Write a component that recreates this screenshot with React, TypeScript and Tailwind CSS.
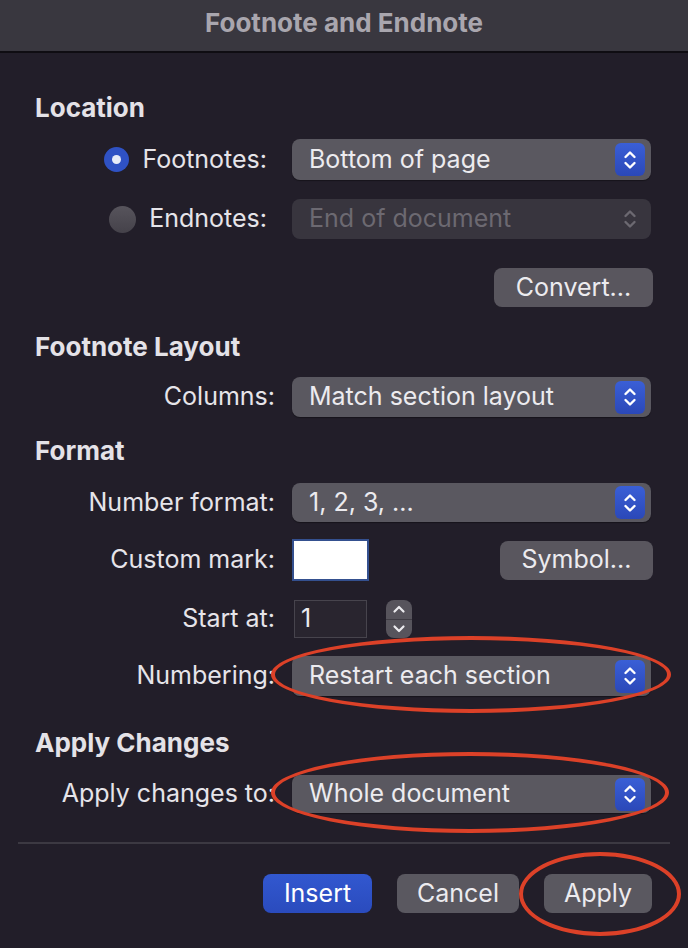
import React from "react";

const FONT = { fontFamily: "Inter, 'Noto Sans', 'Liberation Sans', sans-serif" };

function Chevrons({ color = "#ffffff" }: { color?: string }) {
  return (
    <svg width="16" height="24" viewBox="0 0 16 24" fill="none">
      <path d="M3.5 9 L8 4.5 L12.5 9" stroke={color} strokeWidth="2.4" strokeLinecap="round" strokeLinejoin="round" />
      <path d="M3.5 15 L8 19.5 L12.5 15" stroke={color} strokeWidth="2.4" strokeLinecap="round" strokeLinejoin="round" />
    </svg>
  );
}

function Popup({ text, disabled = false, h = "h-[40px]" }: { text: string; disabled?: boolean; h?: string }) {
  return (
    <div
      className={`w-[359px] ${h} rounded-[8px] flex items-center justify-between pl-[17px] pr-[6px] ${
        disabled ? "bg-[#38353e]" : "bg-[#5a5860] shadow-[0_1px_1px_rgba(0,0,0,0.35)]"
      }`}
    >
      <span className={`text-[25px] ${disabled ? "text-[#6c6971]" : "text-[#ecebef]"}`}>{text}</span>
      {disabled ? (
        <div className="w-[30px] h-[32px] flex items-center justify-center">
          <Chevrons color="#6c6971" />
        </div>
      ) : (
        <div className="w-[30px] h-[33px] rounded-[6px] bg-gradient-to-b from-[#3a5fd6] to-[#2b48b8] flex items-center justify-center">
          <Chevrons />
        </div>
      )}
    </div>
  );
}

function Label({ children }: { children: React.ReactNode }) {
  return <div className="w-[275px] text-right text-[25px] text-[#e6e4e9] shrink-0 whitespace-nowrap">{children}</div>;
}

function Heading({ children, mt }: { children: React.ReactNode; mt: string }) {
  return (
    <div className={`${mt} h-[30px] leading-[30px] pl-[35px] text-[26px] font-bold text-[#e4e2e7]`}>{children}</div>
  );
}

function Ellipse({ cls }: { cls: string }) {
  return <div className={`absolute rounded-[50%] border-[4px] border-[#dc4128] pointer-events-none ${cls}`} />;
}

export default function App() {
  return (
    <div className="relative w-[688px] h-[948px] bg-[#221e29] overflow-hidden" style={FONT}>
      <div className="h-[53px] bg-[#39373f] border-b-[2px] border-[#0f0d12] flex items-center justify-center pb-[6px]">
        <span className="text-[26px] font-bold text-[#a9a6ae]">Footnote and Endnote</span>
      </div>

      <Heading mt="mt-[40px]">Location</Heading>

      <div className="mt-[16px] h-[41px] flex items-center">
        <div className="w-[267px] flex items-center justify-end shrink-0">
          <div className="w-[25px] h-[25px] rounded-full bg-[#2f52c4] flex items-center justify-center mr-[13px]">
            <div className="w-[9px] h-[9px] rounded-full bg-[#e8ecf8]" />
          </div>
          <span className="text-[25px] text-[#e6e4e9]">Footnotes:</span>
        </div>
        <div className="ml-[25px]">
          <Popup text="Bottom of page" h="h-[41px]" />
        </div>
      </div>

      <div className="mt-[19px] h-[40px] flex items-center">
        <div className="w-[267px] flex items-center justify-end shrink-0">
          <div className="w-[27px] h-[27px] rounded-full bg-gradient-to-b from-[#57545c] to-[#45424a] mr-[13px]" />
          <span className="text-[25px] text-[#e6e4e9]">Endnotes:</span>
        </div>
        <div className="ml-[25px]">
          <Popup text="End of document" disabled />
        </div>
      </div>

      <div className="mt-[29px] h-[39px] flex justify-end pr-[35px]">
        <div className="w-[159px] h-[39px] rounded-[8px] bg-[#59565e] flex items-center justify-center text-[25px] text-[#ecebef]">
          Convert...
        </div>
      </div>

      <Heading mt="mt-[25px]">Footnote Layout</Heading>

      <div className="mt-[15px] h-[40px] flex items-center">
        <Label>Columns:</Label>
        <div className="ml-[17px]">
          <Popup text="Match section layout" />
        </div>
      </div>

      <Heading mt="mt-[19px]">Format</Heading>

      <div className="mt-[17px] h-[39px] flex items-center">
        <Label>Number format:</Label>
        <div className="ml-[17px]">
          <Popup text="1, 2, 3, ..." h="h-[39px]" />
        </div>
      </div>

      <div className="mt-[17px] h-[42px] flex items-center">
        <Label>Custom mark:</Label>
        <div className="ml-[17px] w-[77px] h-[42px] bg-white border-[2px] border-[#34508f]" />
        <div className="ml-auto mr-[35px] w-[153px] h-[39px] rounded-[8px] bg-[#59565e] flex items-center justify-center text-[25px] text-[#ecebef]">
          Symbol...
        </div>
      </div>

      <div className="mt-[19px] h-[38px] flex items-center">
        <Label>Start at:</Label>
        <div className="ml-[19px] w-[73px] h-[38px] bg-[#29252f] border border-[#47444d] flex items-center pl-[6px] text-[25px] text-[#ecebef]">
          1
        </div>
        <div className="ml-[19px] w-[26px] h-[38px] rounded-[8px] bg-[#57545c] flex flex-col">
          <div className="flex-1 flex items-center justify-center border-b border-[#3f3c44]">
            <svg width="14" height="10" viewBox="0 0 14 10" fill="none">
              <path d="M2.5 7.5 L7 3 L11.5 7.5" stroke="#ecebef" strokeWidth="2.2" strokeLinecap="round" strokeLinejoin="round" />
            </svg>
          </div>
          <div className="flex-1 flex items-center justify-center">
            <svg width="14" height="10" viewBox="0 0 14 10" fill="none">
              <path d="M2.5 2.5 L7 7 L11.5 2.5" stroke="#ecebef" strokeWidth="2.2" strokeLinecap="round" strokeLinejoin="round" />
            </svg>
          </div>
        </div>
      </div>

      <div className="mt-[18px] h-[40px] flex items-center">
        <Label>Numbering:</Label>
        <div className="ml-[17px]">
          <Popup text="Restart each section" />
        </div>
      </div>

      <Heading mt="mt-[32px]">Apply Changes</Heading>

      <div className="mt-[17px] h-[38px] flex items-center">
        <Label>Apply changes to:</Label>
        <div className="ml-[17px]">
          <Popup text="Whole document" h="h-[38px]" />
        </div>
      </div>

      <div className="mt-[29px] ml-[18px] w-[652px] h-[2px] bg-[#3c3942]" />

      <div className="mt-[30px] h-[39px] flex justify-end gap-[25px] pr-[36px]">
        <div className="w-[109px] h-[39px] rounded-[8px] bg-gradient-to-b from-[#3258d0] to-[#2a4bbd] flex items-center justify-center text-[25px] text-white">
          Insert
        </div>
        <div className="w-[122px] h-[39px] rounded-[8px] bg-[#5a5860] flex items-center justify-center text-[25px] text-[#ecebef]">
          Cancel
        </div>
        <div className="w-[108px] h-[39px] rounded-[8px] bg-[#5a5860] flex items-center justify-center text-[25px] text-[#ecebef]">
          Apply
        </div>
      </div>

      <Ellipse cls="left-[271px] top-[636px] w-[400px] h-[77px]" />
      <Ellipse cls="left-[271px] top-[752px] w-[398px] h-[81px]" />
      <Ellipse cls="left-[519px] top-[852px] w-[162px] h-[84px]" />
    </div>
  );
}
